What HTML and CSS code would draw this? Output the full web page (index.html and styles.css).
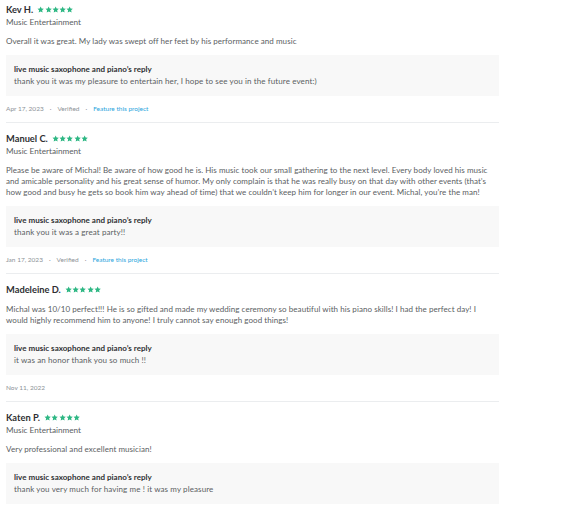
FILE: index.html
```html
<!DOCTYPE html>
<html lang="en">
<head>
<meta charset="utf-8">
<title>Reviews</title>
<link rel="stylesheet" href="styles.css">
</head>
<body>
<svg width="0" height="0" class="defs" aria-hidden="true">
  <defs>
    <symbol id="star" viewBox="0 0 24 24">
      <path d="M12 1.5l3.1 6.9 7.4.8-5.6 5 1.6 7.4L12 17.8l-6.5 3.8 1.6-7.4-5.6-5 7.4-.8z"/>
    </symbol>
  </defs>
</svg>
<main class="reviews">
  <article class="review">
    <div class="head"><span class="name">Kev H.</span><span class="stars"><svg><use href="#star"/></svg><svg><use href="#star"/></svg><svg><use href="#star"/></svg><svg><use href="#star"/></svg><svg><use href="#star"/></svg></span></div>
    <div class="cat">Music Entertainment</div>
    <p class="body">Overall it was great. My lady was swept off her feet by his performance and music</p>
    <div class="reply">
      <div class="reply-title">live music saxophone and piano’s reply</div>
      <div class="reply-text">thank you it was my pleasure to entertain her, I hope to see you in the future event:)</div>
    </div>
    <div class="meta">Apr 17, 2023<span class="dot">·</span>Verified<span class="dot">·</span><a class="link" href="#">Feature this project</a></div>
  </article>
  <article class="review">
    <div class="head"><span class="name">Manuel C.</span><span class="stars"><svg><use href="#star"/></svg><svg><use href="#star"/></svg><svg><use href="#star"/></svg><svg><use href="#star"/></svg><svg><use href="#star"/></svg></span></div>
    <div class="cat">Music Entertainment</div>
    <p class="body">Please be aware of Michal! Be aware of how good he is. His music took our small gathering to the next level. Every body loved his music and amicable personality and his great sense of humor. My only complain is that he was really busy on that day with other events (that’s how good and busy he gets so book him way ahead of time) that we couldn’t keep him for longer in our event. Michal, you’re the man!</p>
    <div class="reply">
      <div class="reply-title">live music saxophone and piano’s reply</div>
      <div class="reply-text">thank you it was a great party!!</div>
    </div>
    <div class="meta">Jan 17, 2023<span class="dot">·</span>Verified<span class="dot">·</span><a class="link" href="#">Feature this project</a></div>
  </article>
  <article class="review">
    <div class="head"><span class="name">Madeleine D.</span><span class="stars"><svg><use href="#star"/></svg><svg><use href="#star"/></svg><svg><use href="#star"/></svg><svg><use href="#star"/></svg><svg><use href="#star"/></svg></span></div>
    <p class="body">Michal was 10/10 perfect!!! He is so gifted and made my wedding ceremony so beautiful with his piano skills! I had the perfect day! I would highly recommend him to anyone! I truly cannot say enough good things!</p>
    <div class="reply">
      <div class="reply-title">live music saxophone and piano’s reply</div>
      <div class="reply-text">it was an honor thank you so much !!</div>
    </div>
    <div class="meta">Nov 11, 2022</div>
  </article>
  <article class="review">
    <div class="head"><span class="name">Katen P.</span><span class="stars"><svg><use href="#star"/></svg><svg><use href="#star"/></svg><svg><use href="#star"/></svg><svg><use href="#star"/></svg><svg><use href="#star"/></svg></span></div>
    <div class="cat">Music Entertainment</div>
    <p class="body">Very professional and excellent musician!</p>
    <div class="reply">
      <div class="reply-title">live music saxophone and piano’s reply</div>
      <div class="reply-text">thank you very much for having me ! it was my pleasure</div>
    </div>
  </article>
</main>
</body>
</html>
```
FILE: styles.css
```css
html, body {
  margin: 0;
  padding: 0;
  background: #ffffff;
}
body {
  font-family: Lato, "Open Sans", "Liberation Sans", sans-serif;
  color: #5a5e62;
}
.defs {
  position: absolute;
  width: 0;
  height: 0;
}
.reviews {
  width: 493px;
  margin-left: 6px;
  padding-top: 4px;
}
.review {
  padding: 10px 0 8px;
  border-bottom: 1px solid #ebedef;
}
.review:first-child {
  padding-top: 0;
}
.review:last-child {
  border-bottom: none;
}
.head {
  display: flex;
  align-items: center;
  gap: 4px;
  height: 12px;
}
.name {
  font-size: 9.3px;
  font-weight: 700;
  color: #2f3033;
  line-height: 12px;
}
.stars {
  display: flex;
}
.stars svg {
  width: 7.3px;
  height: 7.3px;
  fill: #2db783;
}
.cat {
  font-size: 8.2px;
  line-height: 12px;
  color: #5a5e62;
}
.body {
  margin: 8px 0 0;
  font-size: 8px;
  line-height: 11px;
  letter-spacing: 0.06px;
  color: #5a5e62;
}
.reply {
  margin-top: 8px;
  background: #f8f8f8;
  padding: 8px 8px;
}
.reply-title {
  font-size: 8px;
  font-weight: 700;
  line-height: 12px;
  letter-spacing: 0.02px;
  color: #2f3033;
}
.reply-text {
  font-size: 8px;
  line-height: 13px;
  letter-spacing: 0.11px;
  color: #5a5e62;
}
.meta {
  margin-top: 8px;
  font-size: 6.5px;
  line-height: 10px;
  color: #8d9297;
}
.dot {
  margin: 0 6px;
}
.link {
  color: #2aa5dd;
  text-decoration: none;
}
```
